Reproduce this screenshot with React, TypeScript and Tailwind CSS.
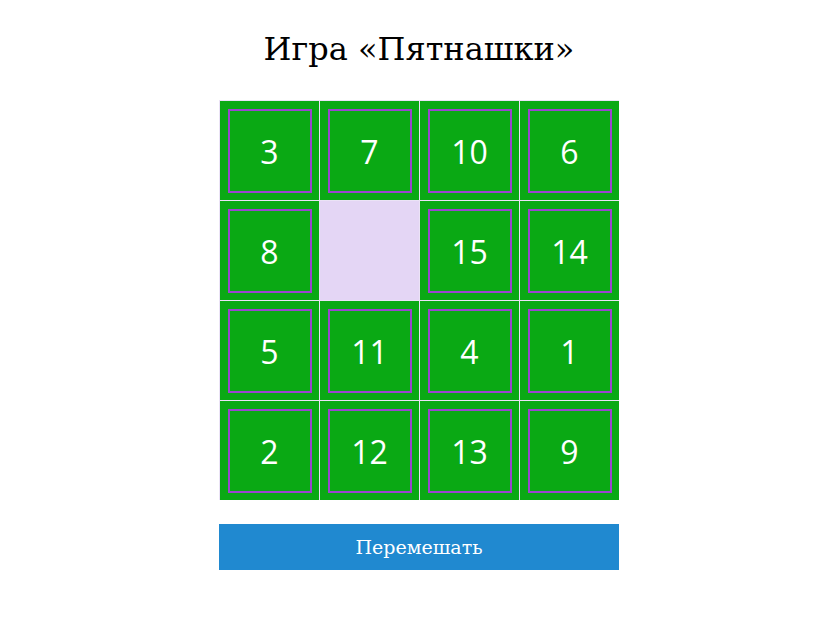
import React from 'react';

const tiles: (number | null)[] = [3, 7, 10, 6, 8, null, 15, 14, 5, 11, 4, 1, 2, 12, 13, 9];

const Tile: React.FC<{ value: number | null }> = ({ value }) => {
    if (value === null) {
        return <div className="bg-[#e4d6f5]" />;
    }
    return (
        <div className="bg-[#0aa914] flex items-center justify-center">
            <div className="w-[84px] h-[84px] border-2 border-[#9b46cf] flex items-center justify-center">
                <span className="text-white text-[32px] leading-none font-['Open_Sans',sans-serif] pt-[2px]">
                    {value}
                </span>
            </div>
        </div>
    );
};

export default function App() {
    return (
        <div className="w-[818px] h-[644px] bg-white flex flex-col items-center pt-[25px] pl-[20px]">
            <h1 className="text-[32px] leading-[48px] text-black font-['DejaVu_Serif',serif] mb-[27px]">
                Игра «Пятнашки»
            </h1>
            <div className="w-[400px] h-[400px] grid grid-cols-4 grid-rows-4 gap-px pl-px pt-px bg-[#ebe3f6]">
                {tiles.map((t, i) => (
                    <Tile key={i} value={t} />
                ))}
            </div>
            <button className="mt-[24px] w-[400px] h-[46px] bg-[#2089d0] text-white text-[19px] font-['DejaVu_Serif',serif]">
                Перемешать
            </button>
        </div>
    );
}
